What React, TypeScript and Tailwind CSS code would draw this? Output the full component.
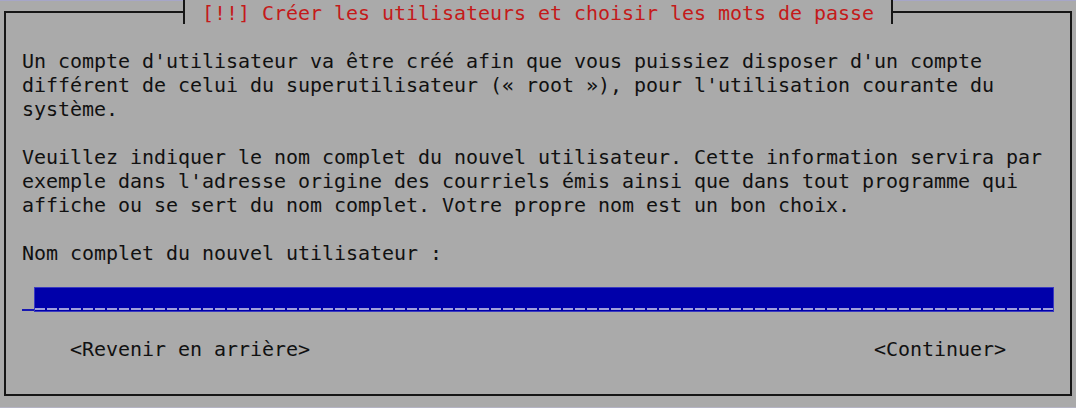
import React from "react";

const mono = "font-['DejaVu_Sans_Mono',monospace] text-[20px] leading-[24px] tracking-[-0.04px]";

export default function App() {
  const p1 = [
    "Un compte d'utilisateur va être créé afin que vous puissiez disposer d'un compte",
    "différent de celui du superutilisateur (« root »), pour l'utilisation courante du",
    "système.",
  ];
  const p2 = [
    "Veuillez indiquer le nom complet du nouvel utilisateur. Cette information servira par",
    "exemple dans l'adresse origine des courriels émis ainsi que dans tout programme qui",
    "affiche ou se sert du nom complet. Votre propre nom est un bon choix.",
  ];
  return (
    <div className={`w-[1076px] h-[408px] bg-[#aaaaaa] overflow-hidden flex flex-col ${mono} text-[#111]`}>
      <div className="h-px bg-[#a6a6c8] shrink-0" />
      <div className="relative ml-[4px] mt-[10px] w-[1068px] h-[385px] border-2 border-[#161616] shrink-0">
        <div className="absolute left-[177px] top-[-13px] w-[710px] h-[24px] bg-[#aaaaaa] border-x-2 border-[#161616] flex justify-center text-[#c41a1a] whitespace-pre">
          <span className="leading-[26px]">[!!] Créer les utilisateurs et choisir les mots de passe</span>
        </div>
        <div className="pl-[16px] pt-[36px] flex flex-col w-[1048px]">
          <div className="flex flex-col whitespace-pre">
            {p1.map((l) => (
              <div key={l}>{l}</div>
            ))}
          </div>
          <div className="flex flex-col whitespace-pre mt-[24px]">
            {p2.map((l) => (
              <div key={l}>{l}</div>
            ))}
          </div>
          <div className="whitespace-pre mt-[24px]">Nom complet du nouvel utilisateur :</div>
          <div className="flex mt-[22px] h-[25px] items-stretch">
            <div className="w-[12px] flex flex-col justify-end pb-[1px]">
              <div className="h-[2px] bg-[#1818b0]" />
            </div>
            <div className="w-[1020px] bg-[#0000aa] border border-[#3a3ac0] flex flex-col justify-end pb-[1px]">
              <div className="h-[2px] bg-[repeating-linear-gradient(to_right,#a0a0dc_0px,#a0a0dc_10px,transparent_10px,transparent_12px)]" />
            </div>
          </div>
          <div className="flex justify-between px-[48px] mt-[25px] whitespace-pre w-[1032px]">
            <span>&lt;Revenir en arrière&gt;</span>
            <span>&lt;Continuer&gt;</span>
          </div>
        </div>
      </div>
      <div className="flex-1" />
      <div className="h-px bg-[#b4b4c4] shrink-0" />
    </div>
  );
}
